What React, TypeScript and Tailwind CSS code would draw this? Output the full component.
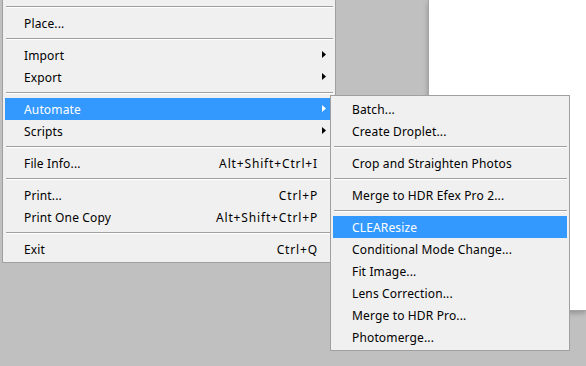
import React from "react";

type Item =
  | { type: "sep" }
  | { type: "item"; label: string; shortcut?: string; arrow?: boolean; active?: boolean };

const mainItems: Item[] = [
  { type: "sep" },
  { type: "item", label: "Place..." },
  { type: "sep" },
  { type: "item", label: "Import", arrow: true },
  { type: "item", label: "Export", arrow: true },
  { type: "sep" },
  { type: "item", label: "Automate", arrow: true, active: true },
  { type: "item", label: "Scripts", arrow: true },
  { type: "sep" },
  { type: "item", label: "File Info...", shortcut: "Alt+Shift+Ctrl+I" },
  { type: "sep" },
  { type: "item", label: "Print...", shortcut: "Ctrl+P" },
  { type: "item", label: "Print One Copy", shortcut: "Alt+Shift+Ctrl+P" },
  { type: "sep" },
  { type: "item", label: "Exit", shortcut: "Ctrl+Q" },
];

const subItems: Item[] = [
  { type: "item", label: "Batch..." },
  { type: "item", label: "Create Droplet..." },
  { type: "sep" },
  { type: "item", label: "Crop and Straighten Photos" },
  { type: "sep" },
  { type: "item", label: "Merge to HDR Efex Pro 2..." },
  { type: "sep" },
  { type: "item", label: "CLEAResize", active: true },
  { type: "item", label: "Conditional Mode Change..." },
  { type: "item", label: "Fit Image..." },
  { type: "item", label: "Lens Correction..." },
  { type: "item", label: "Merge to HDR Pro..." },
  { type: "item", label: "Photomerge..." },
];

function Arrow({ white }: { white?: boolean }) {
  return (
    <svg width="4" height="7" viewBox="0 0 4 7" className="absolute right-[7px] top-[7px]">
      <path d="M0 0 L4 3.5 L0 7 Z" fill={white ? "#ffffff" : "#000000"} />
    </svg>
  );
}

function MenuList({ items }: { items: Item[] }) {
  return (
    <div className="flex flex-col">
      {items.map((it, i) =>
        it.type === "sep" ? (
          <div key={i} className="py-[4px] pl-[3px] pr-[2px]">
            <div className="h-[1px] bg-[#a0a0a0]" />
            <div className="h-[1px] bg-white" />
          </div>
        ) : (
          <div
            key={i}
            className={
              "relative mx-[2px] flex h-[22px] items-center pl-[19px] pr-[15px] pt-[1px] " +
              (it.active ? "bg-[#3399ff] text-white" : "text-black")
            }
          >
            <span className="flex-1 whitespace-nowrap tracking-[0.15px]">{it.label}</span>
            {it.shortcut && (
              <span className="whitespace-nowrap tracking-[0.85px]">{it.shortcut}</span>
            )}
            {it.arrow && <Arrow white={it.active} />}
          </div>
        )
      )}
    </div>
  );
}

export default function App() {
  return (
    <div
      className="relative flex h-[366px] w-[586px] items-start justify-between overflow-hidden bg-[#c0c0c0] text-[12px] leading-none"
      style={{ fontFamily: '"Noto Sans", "Liberation Sans", sans-serif' }}
    >
      {/* main menu */}
      <div className="relative z-10 ml-[2px] w-[334px] border-b border-l border-r border-[#a0a0a0] bg-[#f0f0f0] py-[2px]">
        <MenuList items={mainItems} />
      </div>

      {/* document canvas */}
      <div className="h-[311px] w-[158px] border-b border-l border-[#a4a4a4] bg-white shadow-[0_2px_5px_rgba(0,0,0,0.25)]" />

      {/* submenu (popup overlay) */}
      <div className="absolute left-[330px] top-[95px] z-20 w-[240px] border border-[#a0a0a0] bg-[#f0f0f0] py-[2px]">
        <MenuList items={subItems} />
      </div>
    </div>
  );
}
